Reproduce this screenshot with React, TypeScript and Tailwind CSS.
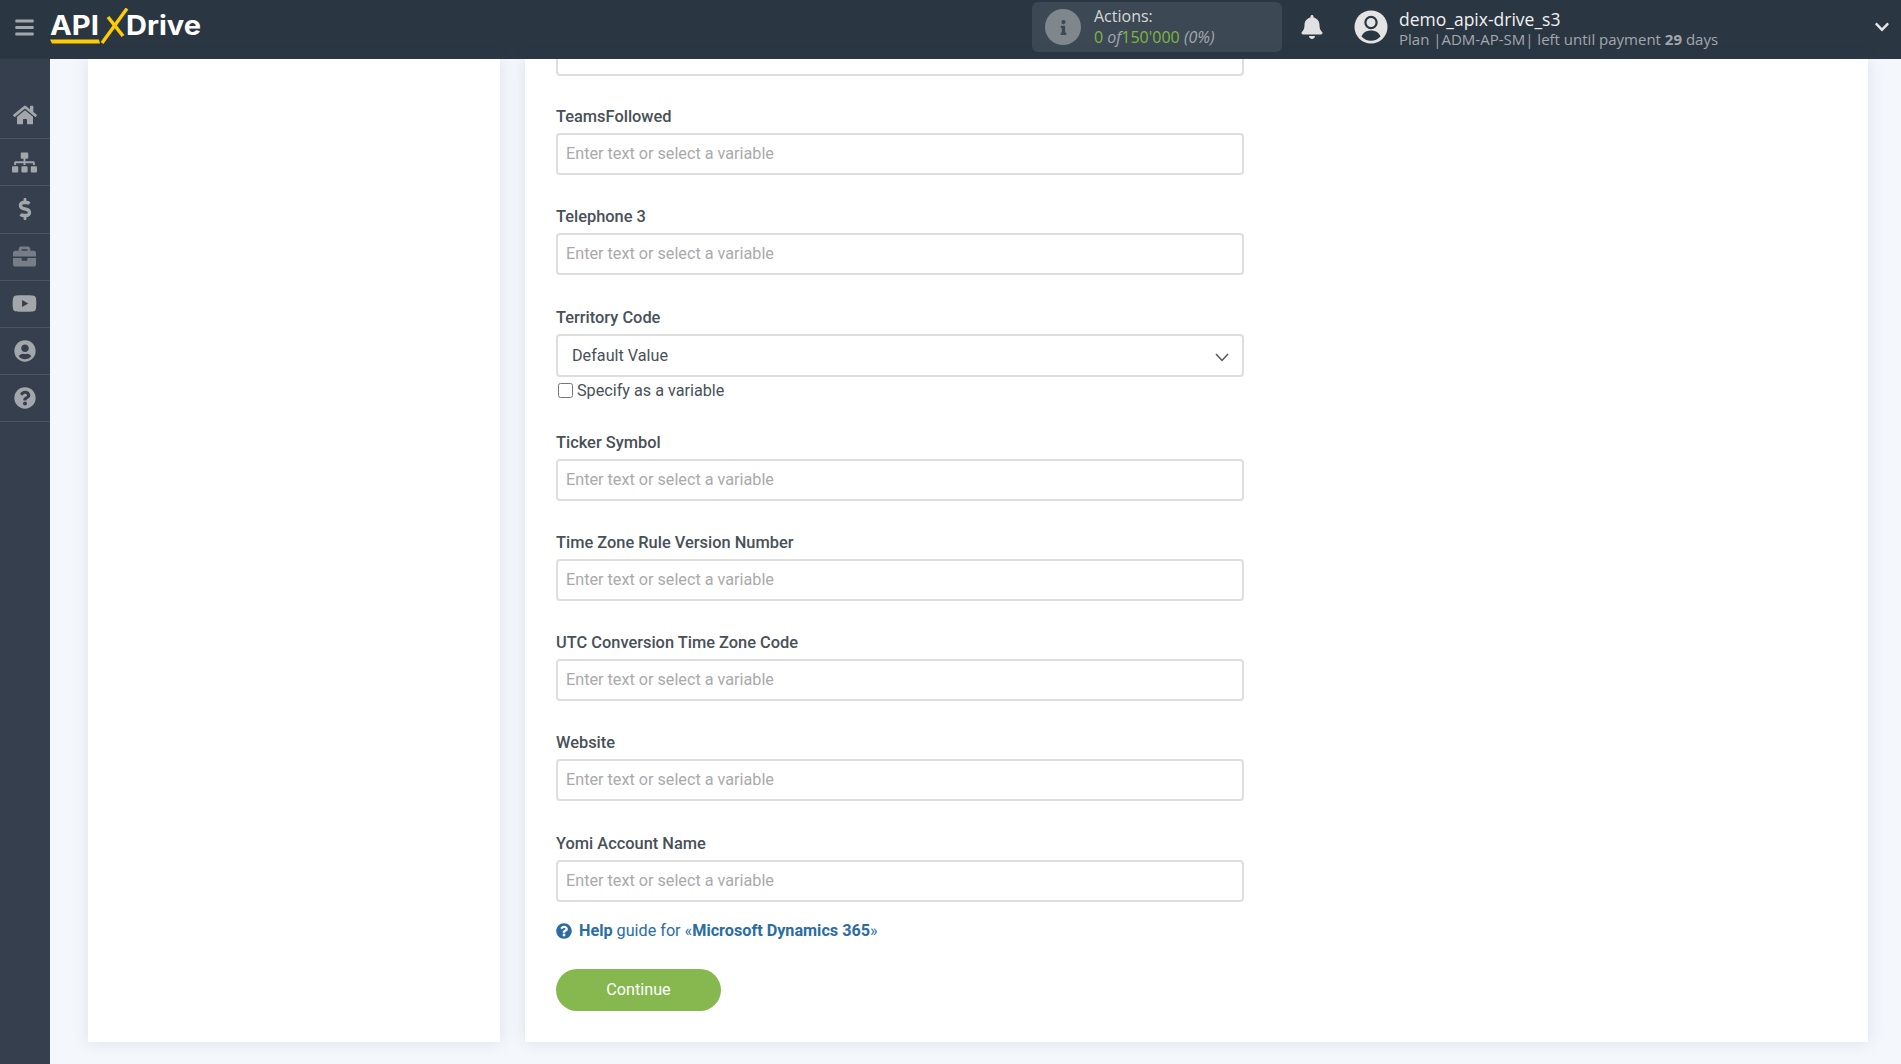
import React from "react";
import { FaBars, FaHome, FaSitemap, FaDollarSign, FaBriefcase, FaYoutube, FaUserCircle, FaQuestionCircle, FaBell, FaInfo, FaChevronDown } from "react-icons/fa";

const side = [
  { I: FaHome, s: "text-[24px]" },
  { I: FaSitemap, s: "text-[25px] -ml-[1px]" },
  { I: FaDollarSign, s: "text-[22px]" },
  { I: FaBriefcase, s: "text-[23px] opacity-60 -ml-[1px]" },
  { I: FaYoutube, s: "text-[25px] -ml-[1px]" },
  { I: FaUserCircle, s: "text-[22px]" },
  { I: FaQuestionCircle, s: "text-[22px]" },
];

function Logo() {
  return (
    <svg width="154" height="38" viewBox="0 0 154 38" className="block">
      <text x="0" y="27" fontFamily="Inter, sans-serif" fontWeight="700" fontSize="26.5" fill="#ffffff" textLength="49" lengthAdjust="spacingAndGlyphs">API</text>
      <path d="M0 31.5h49l1 4H2z" fill="#ffcc00" />
      <path d="M52 35 L77 0.5" stroke="#ffcc00" strokeWidth="3.4" fill="none" />
      <path d="M58 9 L73 28" stroke="#ffcc00" strokeWidth="3.6" fill="none" />
      <text x="76" y="27" fontFamily="Inter, sans-serif" fontWeight="700" fontSize="26.5" fill="#ffffff" textLength="75" lengthAdjust="spacingAndGlyphs">Drive</text>
    </svg>
  );
}

function Avatar() {
  return (
    <svg width="34" height="34" viewBox="0 0 34 34" className="mr-[11px] shrink-0">
      <circle cx="17" cy="17" r="16.5" fill="#e4e4e4" />
      <circle cx="17" cy="12.5" r="5.6" fill="#e4e4e4" stroke="#2b3643" strokeWidth="2.2" />
      <path d="M7.5 26.5c1.5-4 5-6 9.500-6s8 2 9.500 6c-2.500 2.800-5.800 4.200-9.500 4.200s-7-1.400-9.500-4.200z" fill="#2b3643" />
    </svg>
  );
}

function Label({ children }: { children: React.ReactNode }) {
  return <div className="h-[20px] pt-[1px] text-[16.4px] leading-[19px] font-medium text-[#495057] mb-[7px]">{children}</div>;
}

function Field({ label }: { label: string }) {
  return (
    <div className="mb-[31.3px]">
      <Label>{label}</Label>
      <input
        placeholder="Enter text or select a variable"
        className="block w-full h-[42px] border-2 border-[#dedede] rounded-[4px] bg-white px-[8px] pb-[1px] text-[16.2px] text-[#495057] placeholder:text-[#aaaaaa] outline-none"
      />
    </div>
  );
}

export default function App() {
  return (
    <div className="h-[1064px] w-[1901px] overflow-hidden bg-[#f4f7fc] font-['Roboto',sans-serif] flex flex-col">
      <header className="h-[59px] shrink-0 bg-[#2b3643] flex items-center pb-[5px] font-['Open_Sans',sans-serif]">
        <div className="w-[50px] pr-[1px] flex justify-center text-[#a3a7ac]">
          <FaBars className="text-[21px]" />
        </div>
        <Logo />
        <div className="ml-auto mr-[18px] flex items-center w-[250px] h-[50px] bg-[#3c4954] rounded-[6px] pl-[13px] gap-[13px]">
          <div className="w-[36px] h-[36px] rounded-full bg-[#7f878d] flex items-center justify-center text-[#3c4954]">
            <FaInfo className="text-[15px]" />
          </div>
          <div className="leading-[21px] text-[16px]">
            <div className="text-[#d5d8da]">Actions:</div>
            <div className="text-[#80b541]">0 <i className="text-[#a3a7ac]">of</i>150'000 <i className="text-[#a3a7ac]">(0%)</i></div>
          </div>
        </div>
        <FaBell className="text-[#e0e0e0] text-[24px] mr-[30px]" />
        <Avatar />
        <div className="w-[475px] mt-[3px]">
          <div className="text-[17.5px] leading-[20px] text-[#f0f0f0]">demo_apix-drive_s3</div>
          <div className="text-[15px] leading-[20px] text-[#a3a7ac]">Plan |ADM-AP-SM| left until payment <b>29</b> days</div>
        </div>
        <FaChevronDown className="text-[#e6e6e6] text-[16px] mr-[11px]" />
      </header>
      <div className="flex flex-1 min-h-0">
        <aside className="w-[50px] shrink-0 bg-[#353f4d] pt-[33px]">
          {side.map(({ I, s }, i) => (
            <div key={i} className="h-[47.2px] border-b border-[#4a5563] flex items-center justify-center text-[#a3a7ac]">
              <I className={s} />
            </div>
          ))}
        </aside>
        <main className="flex-1 min-w-0 pl-[38px] pr-[33px] flex gap-[25px] items-start">
          <section className="w-[412px] h-[983px] bg-white shadow-[0_0_16px_rgba(60,70,90,0.12)]" />
          <section className="flex-1 h-[983px] bg-white shadow-[0_0_16px_rgba(60,70,90,0.12)] px-[31px]">
            <div className="w-[688px]">
              <div className="h-[17px] border-2 border-t-0 border-[#dedede] rounded-b-[4px] mb-[30px]" />
              <Field label="TeamsFollowed" />
              <Field label="Telephone 3" />
              <div className="mb-[33px]">
                <Label>Territory Code</Label>
                <div className="h-[43px] border-2 border-[#dedede] rounded-[4px] flex items-center pl-[14px] pr-[13px] pt-[3px] text-[16.2px] text-[#495057]">
                  <span>Default Value</span>
                  <svg className="ml-auto mt-[1px]" width="14" height="9" viewBox="0 0 14 9" fill="none" stroke="#555" strokeWidth="1.5"><path d="M1 1l6 6.500L13 1" /></svg>
                </div>
                <label className="flex items-center h-[17px] mt-[5px] text-[16.2px] text-[#495057]">
                  <input type="checkbox" className="w-[15px] h-[15px] ml-[2px] mr-[4px] m-0" />
                  <span className="pt-[2px]">Specify as a variable</span>
                </label>
              </div>
              <Field label="Ticker Symbol" />
              <Field label="Time Zone Rule Version Number" />
              <Field label="UTC Conversion Time Zone Code" />
              <Field label="Website" />
              <Field label="Yomi Account Name" />
              <div className="flex items-center gap-[7px] h-[20px] text-[16.2px] text-[#2b6da3] -mt-[12px]">
                <FaQuestionCircle className="text-[16px]" />
                <span><span className="font-bold">Help</span> guide for «<span className="font-bold">Microsoft Dynamics 365</span>»</span>
              </div>
              <button className="mt-[28px] w-[165px] h-[42px] rounded-full bg-[#86b84f] text-white text-[16.2px] font-normal">Continue</button>
            </div>
          </section>
        </main>
      </div>
    </div>
  );
}
